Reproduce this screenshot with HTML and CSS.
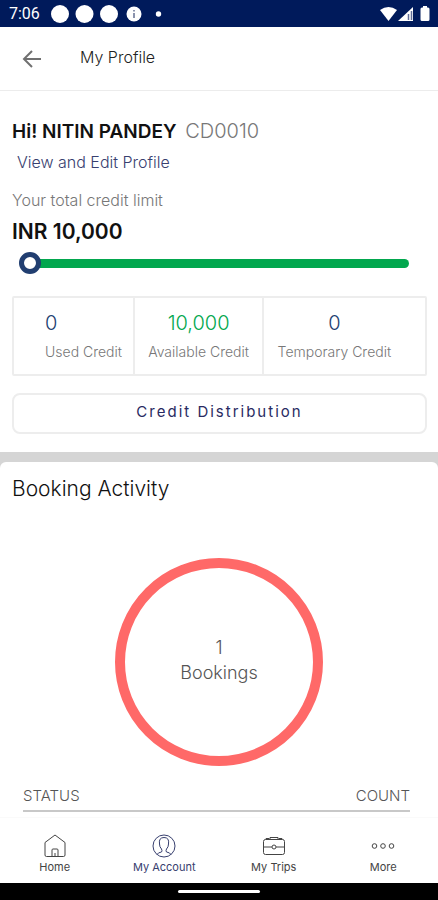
FILE: index.html
```html
<!DOCTYPE html>
<html lang="en">
<head>
<meta charset="utf-8">
<meta name="viewport" content="width=device-width, initial-scale=1">
<title>My Profile</title>
<link rel="stylesheet" href="styles.css">
</head>
<body>
<div class="statusbar">
  <span class="clock">7:06</span>
  <svg class="notices" width="116" height="20" viewBox="0 0 116 20" aria-hidden="true">
    <g fill="#fff"><circle cx="9" cy="10" r="9"/><circle cx="33.500" cy="10" r="9"/><circle cx="58" cy="10" r="9"/><circle cx="83" cy="10" r="7.500"/><circle cx="107.500" cy="10" r="2.700"/></g>
    <path d="M83 6v1.500M83 9v5" stroke="#8b93ad" stroke-width="2"/>
  </svg>
  <svg class="signals" width="50" height="16" viewBox="0 0 50 16" aria-hidden="true">
    <path d="M0 4Q8.500-2 17 4L8.500 15Z" fill="#fff"/>
    <path d="M18 15L33 1V15Z" fill="#fff"/>
    <path d="M28.500 8v6M31.500 5v9" stroke="#626e98" stroke-width="1.500"/>
    <path d="M42 1.500h1V0h4v1.500h1q1.500 0 1.500 1.500v10.500q0 1.500-1.500 1.500h-6q-1.500 0-1.500-1.500V3q0-1.500 1.500-1.500Z" fill="#fff"/>
  </svg>
</div>
<header class="topbar">
  <button class="back" type="button" aria-label="Back">
    <svg width="20" height="20" viewBox="0 0 20 20" fill="none" stroke="#707070" stroke-width="2"><path d="M19 10H2M10 2L2 10l8 8"/></svg>
  </button>
  <h1 class="title">My Profile</h1>
</header>
<main class="content">
  <section class="profile">
    <h2 class="name">Hi! NITIN PANDEY <span class="code">CD0010</span></h2>
    <a class="edit" href="#profile">View and Edit Profile</a>
    <label class="limit-label" for="credit">Your total credit limit</label>
    <p class="limit">INR 10,000</p>
    <input class="slider" id="credit" type="range" min="0" max="10000" value="0">
    <div class="credits">
      <div class="credit used"><span class="amount">0</span><span class="caption">Used Credit</span></div>
      <div class="credit available"><span class="amount">10,000</span><span class="caption">Available Credit</span></div>
      <div class="credit temporary"><span class="amount">0</span><span class="caption">Temporary Credit</span></div>
    </div>
    <button class="distribution" type="button">Credit Distribution</button>
  </section>
  <div class="divider">
    <section class="activity">
      <h2 class="heading">Booking Activity</h2>
      <div class="ring"><span>1</span><span>Bookings</span></div>
      <table class="bookings">
        <thead><tr><th scope="col">STATUS</th><th scope="col" class="count">COUNT</th></tr></thead>
      </table>
    </section>
  </div>
</main>
<nav class="tabs">
  <a class="tab" href="#home">
    <svg width="24" height="26" viewBox="0 0 24 26" fill="none" stroke="currentColor"><path d="M2 9.500L12 2l10 7.500V22q0 1.500-1.500 1.500h-17Q2 23.500 2 22Z"/><path d="M9 23v-6q0-1 1-1h4q1 0 1 1v6M12 23v-3"/></svg>
    Home
  </a>
  <a class="tab active" href="#account" aria-current="page">
    <svg width="24" height="26" viewBox="0 0 24 26" fill="none" stroke="currentColor"><circle cx="12" cy="13" r="11"/><path d="M5 21.500Q6 19.500 9.500 19Q10.500 18 9.500 16Q7.500 14 7.500 11Q6.500 4.500 12 4.500T16.500 11Q16.500 14 14.500 16Q13.500 18 14.500 19Q18 19.500 19 21.500"/></svg>
    My Account
  </a>
  <a class="tab" href="#trips">
    <svg width="24" height="26" viewBox="0 0 24 26" fill="none" stroke="currentColor"><rect x="1.500" y="6.500" width="21" height="15" rx="2"/><path d="M4 6.500V5.500h3v1M17 6.500V5.500h3v1M8 6.500V4.500h8v2M1.500 14H10M14 14h8.500"/><circle cx="12" cy="14" r="2"/></svg>
    My Trips
  </a>
  <a class="tab" href="#more">
    <svg width="24" height="26" viewBox="0 0 24 26" fill="none" stroke="currentColor"><circle cx="3.500" cy="13" r="2.300"/><circle cx="12" cy="13" r="2.300"/><circle cx="20.500" cy="13" r="2.300"/></svg>
    More
  </a>
</nav>
<div class="gesture"><span class="pill"></span></div>
</body>
</html>
```
FILE: styles.css
```css
* {
  box-sizing: border-box;
}

body {
  margin: 0;
  min-height: 100vh;
  display: flex;
  flex-direction: column;
  background: #fff;
  color: #111;
  font-family: Inter, "Liberation Sans", sans-serif;
  font-weight: 300;
}

h1, h2, p {
  margin: 0;
  font-weight: inherit;
}

a {
  color: inherit;
  text-decoration: none;
}

button {
  font: inherit;
  background: none;
  border: 0;
  padding: 0;
}

svg {
  display: block;
}

.statusbar {
  display: flex;
  align-items: center;
  height: 27px;
  padding: 0 8px 0 9px;
  background: #001a5b;
  color: #fff;
}

.clock {
  width: 42px;
  font: 400 16px/28px Roboto, sans-serif;
}

.signals {
  margin-left: auto;
}

.topbar {
  display: flex;
  align-items: center;
  height: 64px;
  padding: 0 22px;
  border-bottom: 1px solid #ececec;
}

.back {
  width: 58px;
}

.title {
  font-size: 16px;
  line-height: 24px;
  padding-bottom: 4px;
  color: #222;
}

.content {
  flex: 1;
  display: flex;
  flex-direction: column;
}

.profile {
  display: flex;
  flex-direction: column;
  padding: 26px 11px 18px 12px;
}

.name {
  font-size: 19px;
  line-height: 28px;
  font-weight: 600;
}

.code {
  margin-left: 4px;
  font-size: 20px;
  font-weight: 300;
  color: #777;
}

.edit {
  align-self: flex-start;
  margin: 4px 0 0 5px;
  font-size: 16px;
  line-height: 24px;
  color: #38406f;
}

.limit-label {
  margin-top: 14px;
  font-size: 16px;
  line-height: 24px;
  color: #777;
}

.limit {
  margin-top: 4px;
  font-size: 21px;
  line-height: 32px;
  font-weight: 600;
}

.slider {
  appearance: none;
  height: 22px;
  margin: 4px 18px 0 7px;
  background: none;
}

.slider::-webkit-slider-runnable-track {
  height: 9px;
  border-radius: 5px;
  background: linear-gradient(to right, transparent 10px, #02a74e 10px);
}

.slider::-webkit-slider-thumb {
  appearance: none;
  width: 22px;
  height: 22px;
  margin-top: -7px;
  border: 5px solid #213e70;
  border-radius: 50%;
  background: #fff;
}

.credits {
  display: grid;
  grid-template-columns: 120fr 129fr 164fr;
  margin-top: 22px;
  border: 2px solid #ededed;
  border-radius: 2px;
}

.credit {
  display: flex;
  flex-direction: column;
  align-items: center;
  padding: 10px 0;
  white-space: nowrap;
}

.credit + .credit {
  border-left: 2px solid #ededed;
}

.used {
  align-items: flex-start;
  padding-left: 31px;
}

.temporary {
  padding-right: 20px;
}

.amount {
  font-size: 20px;
  line-height: 30px;
  color: #213e70;
}

.available .amount {
  color: #02a74e;
}

.caption {
  margin-top: 2px;
  font-size: 14px;
  line-height: 24px;
  color: #777;
}

.distribution {
  height: 41px;
  margin-top: 17px;
  padding-bottom: 4px;
  border: 2px solid #ededed;
  border-radius: 8px;
  font-size: 15px;
  font-weight: 400;
  letter-spacing: 2px;
  color: #292a62;
}

.divider {
  flex: 1;
  padding-top: 10px;
  background: #d5d5d5;
}

.activity {
  display: flex;
  flex-direction: column;
  height: 100%;
  border-radius: 6px 6px 0 0;
  background: #fff;
  padding-top: 12px;
}

.heading {
  padding-left: 12px;
  font-size: 21px;
  line-height: 30px;
}

.ring {
  display: flex;
  flex-direction: column;
  align-items: center;
  justify-content: center;
  align-self: center;
  width: 208px;
  height: 208px;
  margin-top: 54px;
  padding-bottom: 4px;
  border: 10px solid #ff6968;
  border-radius: 50%;
  font-size: 18px;
  line-height: 25px;
  color: #555;
}

.bookings {
  margin: 18px 28px 5px 23px;
  border-collapse: collapse;
}

.bookings th {
  padding: 0 0 2px;
  border-bottom: 2px solid #c8c8c8;
  font-size: 15px;
  line-height: 24px;
  font-weight: 300;
  text-align: left;
  color: #555;
}

.bookings .count {
  text-align: right;
}

.tabs {
  display: grid;
  grid-template-columns: repeat(4, 1fr);
  padding: 15px 0 8px;
  border-top: 1px solid #fafafa;
  background: #fff;
}

.tab {
  display: flex;
  flex-direction: column;
  align-items: center;
  font-size: 11px;
  line-height: 16px;
  font-weight: 400;
  color: #444;
}

.active {
  color: #38406f;
}

.gesture {
  display: flex;
  justify-content: center;
  align-items: center;
  height: 17px;
  background: #000;
}

.pill {
  width: 82px;
  height: 3px;
  border-radius: 2px;
  background: #fff;
}
```
